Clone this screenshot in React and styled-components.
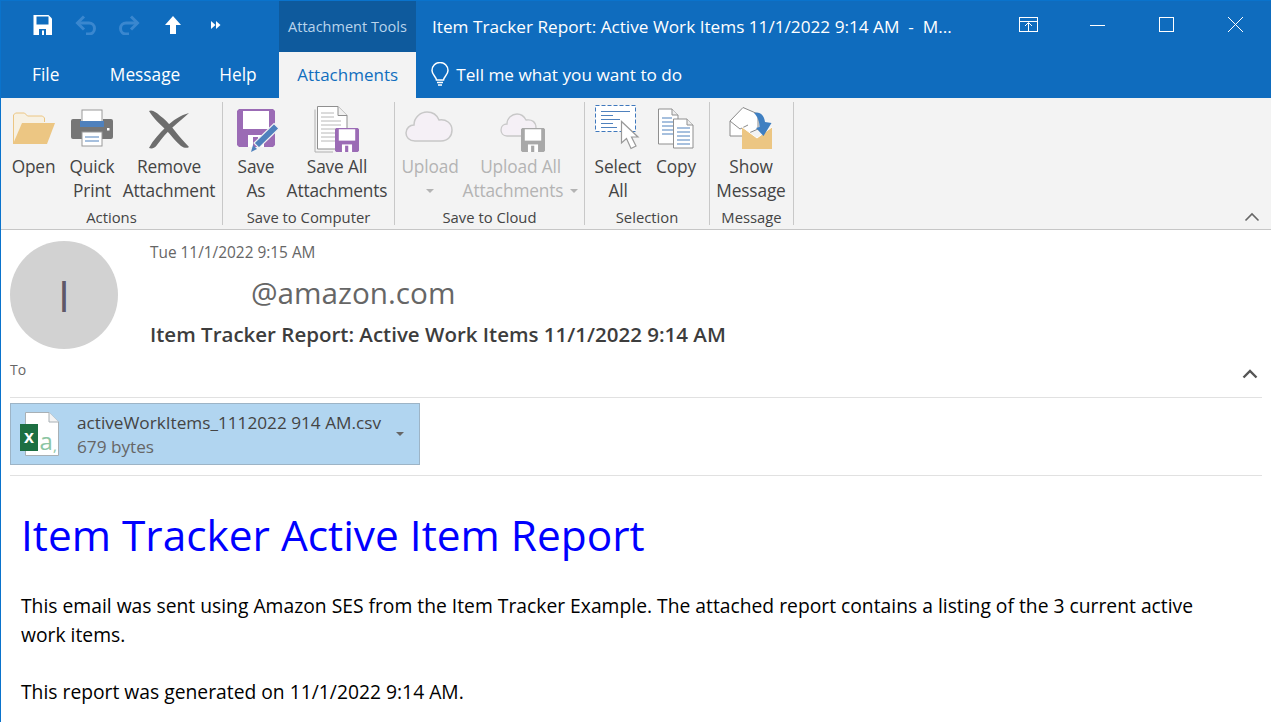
import React from "react";
import styled, { createGlobalStyle } from "styled-components";

const UI_FONT = `"Open Sans", "Noto Sans", "Liberation Sans", sans-serif`;

const GlobalStyle = createGlobalStyle`
  html, body {
    margin: 0;
    padding: 0;
    background: #fff;
    overflow: hidden;
  }
  body {
    font-family: ${UI_FONT};
  }
`;

const Window = styled.div`
  width: 1271px;
  height: 722px;
  box-sizing: border-box;
  border-left: 1px solid #0a73cc;
  overflow: hidden;
  background: #fff;
  display: flex;
  flex-direction: column;
`;

const TitleBar = styled.header`
  height: 52px;
  flex: none;
  display: flex;
  align-items: stretch;
  background: #0f6cbe;
  border-top: 1px solid #0a73cc;
  box-sizing: border-box;
  color: #fff;
`;

const QuickAccess = styled.div`
  width: 278px;
  flex: none;
  display: flex;
  align-items: center;
  padding-left: 26px;
  box-sizing: border-box;
`;

const QuickButton = styled.span`
  width: ${(p) => p.$w}px;
  margin-left: ${(p) => p.$gap || 0}px;
  height: 32px;
  display: flex;
  align-items: center;
  justify-content: center;
  margin-top: -3px;
`;

const ToolsLabel = styled.div`
  width: 137px;
  flex: none;
  background: #0e5a9d;
  color: #b9d4ec;
  font-size: 14.5px;
  display: flex;
  align-items: center;
  justify-content: center;
  padding-bottom: 1px;
  box-sizing: border-box;
`;

const WindowTitle = styled.div`
  flex: 1;
  padding-left: 16px;
  font-size: 17.2px;
  white-space: pre;
  display: flex;
  align-items: center;
  padding-bottom: 1px;
`;

const WindowControls = styled.div`
  display: flex;
  margin-right: 1px;
`;

const ControlButton = styled.span`
  width: 69px;
  display: flex;
  align-items: center;
  justify-content: center;
  margin-top: -5px;
`;

const TabBar = styled.nav`
  height: 46px;
  flex: none;
  display: flex;
  align-items: stretch;
  background: #0f6cbe;
  color: #fff;
`;

const Tab = styled.div`
  padding: 0 19.5px;
  font-size: 17.3px;
  display: flex;
  align-items: center;
  padding-bottom: 1px;
  box-sizing: border-box;
  &:first-child {
    padding-left: 31px;
    padding-right: 31px;
  }
`;

const ActiveTab = styled(Tab)`
  width: 137px;
  margin-left: 3px;
  padding: 0 0 1px;
  justify-content: center;
  font-size: 17px;
  background: #f3f3f3;
  color: #106ebe;
`;

const TellMe = styled.div`
  display: flex;
  align-items: center;
  gap: 6px;
  margin-left: 14px;
  font-size: 17.2px;
  padding-bottom: 1px;
`;

const Ribbon = styled.section`
  height: 132px;
  flex: none;
  display: flex;
  background: #f3f3f3;
  border-bottom: 1px solid #c6c6c6;
  box-sizing: border-box;
`;

const Group = styled.div`
  width: ${(p) => p.$w}px;
  flex: none;
  box-sizing: border-box;
  margin: 4px 0;
  border-right: 1px solid #c8c8c8;
  display: flex;
  flex-direction: column;
`;

const GroupButtons = styled.div`
  flex: 1;
  display: flex;
`;

const GroupLabel = styled.div`
  height: 16px;
  font-size: 14.8px;
  color: #444;
  text-align: center;
  line-height: 16px;
`;

const RibbonButton = styled.div`
  width: ${(p) => p.$w}px;
  flex: none;
  display: flex;
  flex-direction: column;
  align-items: center;
  color: ${(p) => (p.$disabled ? "#b4b4b4" : "#444")};
  font-size: 17.3px;
  line-height: 24px;
  letter-spacing: -0.15px;
`;

const IconSlot = styled.div`
  height: 53px;
  width: 100%;
  display: flex;
  justify-content: center;
  flex: none;
`;

const ButtonLine = styled.span`
  white-space: nowrap;
  display: flex;
  align-items: center;
  justify-content: center;
  height: 24px;
`;

const Caret = styled.i`
  display: inline-block;
  width: 0;
  height: 0;
  margin-left: ${(p) => p.$gap || 0}px;
  border-left: 4px solid transparent;
  border-right: 4px solid transparent;
  border-top: 4px solid ${(p) => p.$color || "#b4b4b4"};
`;

const CollapseButton = styled.div`
  margin-left: auto;
  align-self: flex-end;
  margin-right: 11px;
  margin-bottom: 7px;
  display: flex;
`;

const Message = styled.main`
  flex: 1;
  padding: 0 9px;
  min-height: 0;
`;

const SenderRow = styled.div`
  display: flex;
  padding-top: 12px;
`;

const Avatar = styled.div`
  width: 108px;
  height: 108px;
  flex: none;
  margin-top: -1px;
  border-radius: 50%;
  background: #d2d2d2;
  color: #5f5868;
  font-size: 43px;
  display: flex;
  align-items: center;
  justify-content: center;
`;

const SenderInfo = styled.div`
  margin-left: 32px;
  display: flex;
  flex-direction: column;
`;

const DateLine = styled.div`
  font-size: 15.4px;
  color: #666;
  line-height: 22px;
`;

const Address = styled.div`
  margin: 9px 0 0 101px;
  font-size: 29.7px;
  line-height: 40px;
  color: #666;
`;

const Subject = styled.div`
  margin-top: 6px;
  font-size: 20.5px;
  line-height: 30px;
  font-weight: 600;
  color: #3d3d3d;
`;

const ToRow = styled.div`
  display: flex;
  justify-content: space-between;
  align-items: flex-end;
  height: 49px;
  box-sizing: border-box;
  padding: 11px 4px 18px 0;
  border-bottom: 1px solid #e1e1e1;
  font-size: 14px;
  color: #666;
`;

const ToLabel = styled.span`
  align-self: flex-start;
  line-height: 20px;
`;

const AttachmentRow = styled.div`
  padding: 5px 0 10px;
  border-bottom: 1px solid #e1e1e1;
`;

const AttachmentCard = styled.div`
  width: 410px;
  height: 62px;
  box-sizing: border-box;
  background: #b1d5f0;
  border: 1px solid #9db4c6;
  display: flex;
  align-items: center;
  padding-left: 8px;
`;

const AttachmentText = styled.div`
  margin-left: 17px;
  flex: 1;
  line-height: 24px;
  padding-top: 2px;
`;

const AttachmentName = styled.div`
  font-size: 17.2px;
  color: #444;
  white-space: nowrap;
`;

const AttachmentSize = styled.div`
  font-size: 17.2px;
  color: #666;
`;

const CardCaret = styled.div`
  margin-right: 15px;
  display: flex;
`;

const MailBody = styled.article`
  padding: 33px 0 0 11px;
  color: #000;
`;

const Heading = styled.h1`
  margin: 0;
  font-size: 42.4px;
  font-weight: 400;
  line-height: 52px;
  color: #0000ff;
`;

const Paragraph = styled.p`
  margin: ${(p) => p.$top}px 0 0;
  font-size: 19.3px;
  line-height: 29px;
  max-width: 1190px;
`;

function SaveSmall() {
  return (
    <svg width="20" height="20" viewBox="0 0 20 20">
      <path d="M0.500 0h15l3.500 3.500V20H0.500z" fill="#fff" />
      <rect x="3.500" y="1.500" width="12" height="8" fill="#0f6cbe" />
      <rect x="6" y="14" width="7" height="6" fill="#0f6cbe" />
      <rect x="9" y="15.500" width="2" height="4.500" fill="#fff" />
    </svg>
  );
}

function UndoArrow({ flip }) {
  return (
    <svg width="22" height="20" viewBox="0 0 22 20" style={flip ? { transform: "scaleX(-1)" } : undefined}>
      <path d="M2.500 8H14a5.500 5.500 0 0 1 0 11h-3" fill="none" stroke="#3a87cf" strokeWidth="3" />
      <path d="M9 1.500 2.500 8 9 14.500" fill="none" stroke="#3a87cf" strokeWidth="3" />
    </svg>
  );
}

function UpArrow() {
  return (
    <svg width="16" height="18" viewBox="0 0 16 18">
      <path d="M8 0 16 9H11V18H5V9H0z" fill="#fff" />
    </svg>
  );
}

function MoreArrows() {
  return (
    <svg width="10" height="8" viewBox="0 0 10 8">
      <path d="M0 0 4.500 4 0 8zM5 0 9.500 4 5 8z" fill="#fff" />
    </svg>
  );
}

function RibbonDisplay() {
  return (
    <svg width="19" height="15" viewBox="0 0 19 15" fill="none" stroke="#fff" strokeWidth="1">
      <rect x="0.500" y="0.500" width="18" height="14" />
      <path d="M0.500 4.500h18M9.500 15V6M6 9l3.500-3.500L13 9" />
    </svg>
  );
}

function Minimize() {
  return (
    <svg width="15" height="15" viewBox="0 0 15 15">
      <path d="M0 8.500h15" stroke="#fff" strokeWidth="1" />
    </svg>
  );
}

function Maximize() {
  return (
    <svg width="15" height="15" viewBox="0 0 15 15">
      <rect x="0.500" y="0.500" width="14" height="14" fill="none" stroke="#fff" />
    </svg>
  );
}

function CloseX() {
  return (
    <svg width="15" height="15" viewBox="0 0 15 15">
      <path d="M0 0 15 15M15 0 0 15" stroke="#fff" strokeWidth="1" />
    </svg>
  );
}

function Bulb() {
  return (
    <svg width="20" height="25" viewBox="0 0 20 25" fill="none" stroke="#fff" strokeWidth="1.500">
      <path d="M6.500 18c0-3-4.500-5-4.500-9.500a8 8 0 0 1 16 0c0 4.500-4.500 6.500-4.500 9.500z" />
      <path d="M7 20.500h6M8 23h4" />
    </svg>
  );
}

function FolderIcon() {
  return (
    <svg width="44" height="36" viewBox="0 0 44 36" style={{ marginTop: 8 }}>
      <path d="M1.500 34V5l2-2h9l3 3h15l2 2v4" fill="#f7f1e3" stroke="#ecc683" strokeWidth="1" />
      <path d="M1 34 10 13h33l-8 21z" fill="#ecc683" />
    </svg>
  );
}

function PrinterIcon() {
  return (
    <svg width="44" height="38" viewBox="0 0 44 38" style={{ marginTop: 7 }}>
      <rect x="12" y="1" width="20" height="14" fill="#fff" stroke="#9a9a9a" />
      <path d="M1 12a2 2 0 0 1 2-2h8v7h22v-7h8a2 2 0 0 1 2 2v16a2 2 0 0 1-2 2H3a2 2 0 0 1-2-2z" fill="#767676" />
      <rect x="10" y="12" width="24" height="6" fill="#4f81bd" />
      <rect x="37" y="19" width="2.500" height="2.500" fill="#fff" />
      <rect x="12" y="23" width="20" height="14" fill="#fff" stroke="#9a9a9a" />
      <path d="M15 28h14M15 32h14" stroke="#4f81bd" strokeWidth="1" />
    </svg>
  );
}

function RemoveIcon() {
  return (
    <svg width="44" height="40" viewBox="0 0 44 40" style={{ marginTop: 7 }}>
      <path d="M2 2C5 0 9 3 16 9c4 3.500 8 8 12 13 4 5 9 11 14 16-2 1.500-5 1-8-1-5-4-10-11-15-16C13 15 6 9 2 2z" fill="#6d6d6d" />
      <path d="M42 4c-8 2-16 7-23 14C12 25 6 31 2 39c3 1 6 0 8-3 5-7 10-13 16-18 5-5 11-9 16-14z" fill="#6d6d6d" />
    </svg>
  );
}

function Floppy({ size, color, x, y }) {
  return (
    <g transform={`translate(${x} ${y}) scale(${size / 38})`}>
      <path d="M2 0h34l2 2v34l-2 2H2l-2-2V2z" fill={color} />
      <rect x="6" y="2" width="26" height="18" fill="#fff" />
      <rect x="11" y="26" width="16" height="12" fill="#fff" />
      <rect x="16" y="28" width="5" height="10" fill={color} />
    </g>
  );
}

function SaveAsIcon() {
  return (
    <svg width="48" height="46" viewBox="0 0 48 46" style={{ marginTop: 7 }}>
      <Floppy size={38} color="#9b6bb5" x={5} y={0} />
      <path d="M42 14.500 47 19.500 27 39 22 34z" fill="#4f81bd" stroke="#f3f3f3" strokeWidth="1.200" />
      <path d="M21 36 25 40 19 43z" fill="#4f81bd" />
    </svg>
  );
}

function SaveAllIcon() {
  return (
    <svg width="46" height="50" viewBox="0 0 46 50" style={{ marginTop: 3 }}>
      <path d="M3.500 1.500H24l9 9V44H3.500z" fill="#fff" stroke="#8f8f8f" />
      <path d="M1 4.500V47h18" fill="none" stroke="#b0b0b0" />
      <path d="M24 1.500v9h9" fill="#f0f0f0" stroke="#8f8f8f" />
      <path d="M7 8h13M7 12h13M7 16h20M7 20h20M7 24h20M7 28h14M7 32h14M7 36h14" stroke="#b8b8b8" strokeWidth="1" />
      <Floppy size={24} color="#9b6bb5" x={21} y={23} />
    </svg>
  );
}

function CloudIcon() {
  return (
    <svg width="50" height="34" viewBox="0 0 50 34" style={{ marginTop: 8 }}>
      <path
        d="M10 31C4 31 1 27 1 23c0-5 4-8 8-8 0-8 7-13 13-13 6 0 10 3 12 8 7-1 13 3 13 10 0 6-4 11-11 11z"
        fill="#f5f0f6"
        stroke="#c8c8c8"
        strokeWidth="1.500"
      />
    </svg>
  );
}

function CloudSaveIcon() {
  return (
    <svg width="48" height="50" viewBox="0 0 48 50" style={{ marginTop: 2 }}>
      <g transform="translate(3 4)">
        <path
          d="M7 28C3 28 1 25 1 22c0-4 3-6 6-6 0-6 5-10 10-10 4 0 7 2 9 6 6-1 10 2 10 8 0 5-3 8-7 8z"
          fill="#f5f0f6"
          stroke="#c8c8c8"
          strokeWidth="1.300"
        />
      </g>
      <Floppy size={24} color="#a8a8a8" x={24} y={24} />
    </svg>
  );
}

function SelectAllIcon() {
  return (
    <svg width="46" height="46" viewBox="0 0 46 46" style={{ marginTop: 3 }}>
      <rect x="0.500" y="0.500" width="40" height="26" fill="#fff" stroke="#3f78bd" strokeDasharray="4 2" />
      <path d="M6 6.500h29M6 10.500h12M6 14.500h19M6 18.500h12M6 22.500h16" stroke="#4f81bd" strokeWidth="1" />
      <path d="M26.500 16.500V38l5-4.500 4.500 10 5-2.500-4.500-9H43z" fill="#fff" stroke="#999" strokeWidth="1.200" />
    </svg>
  );
}

function CopyIcon() {
  return (
    <svg width="38" height="42" viewBox="0 0 38 42" style={{ marginTop: 6 }}>
      <path d="M1.500 1H15l6 6v29H1.500z" fill="#fff" stroke="#8f8f8f" />
      <path d="M15 1v6h6" fill="#eee" stroke="#8f8f8f" />
      <path d="M5 10h10M5 14h12M5 18h12M5 22h12M5 26h12" stroke="#4f81bd" strokeWidth="1" />
      <path d="M16.500 11H30l6 6v23H16.500z" fill="#fff" stroke="#8f8f8f" />
      <path d="M30 11v6h6" fill="#eee" stroke="#8f8f8f" />
      <path d="M20 20h13M20 24h13M20 28h13M20 32h13M20 36h13" stroke="#4f81bd" strokeWidth="1" />
    </svg>
  );
}

function ShowMessageIcon() {
  return (
    <svg width="46" height="46" viewBox="0 0 46 46" style={{ marginTop: 3 }}>
      <path d="M2 16 15 2.500 30 9V24L14 31H2z" fill="#fff" stroke="#8a8a8a" />
      <path d="M2 16 12 24 20 20" fill="none" stroke="#8a8a8a" />
      <path d="M14 22 29 33 44 22V44H14z" fill="#ecc683" />
      <path d="M14 22 29 33 44 22" fill="none" stroke="#fff" strokeWidth="1" />
      <path d="M26 8c6-2 10 2 11 9l6.500 1L35.500 31 28 23l3.500-1c0-5-1.500-10-5.500-14z" fill="#3f7fc1" />
    </svg>
  );
}

function ExcelIcon() {
  return (
    <svg width="41" height="44" viewBox="0 0 41 44">
      <path d="M6.500 0.500H30L39.500 10V43.500H6.500z" fill="#fff" stroke="#a8b0b5" />
      <path d="M30 0.500V10H39.500" fill="#f4f4f4" stroke="#a8b0b5" />
      <rect x="1" y="12" width="18" height="27" fill="#1d6f42" />
      <text x="10" y="31" textAnchor="middle" fontFamily="Liberation Sans, sans-serif" fontSize="18" fontWeight="700" fill="#fff">x</text>
      <text x="20.500" y="38" fontFamily="Open Sans, sans-serif" fontSize="24" fill="#8cc5a3">a</text>
      <text x="34" y="39" fontFamily="Open Sans, sans-serif" fontSize="15" fill="#8cc5a3">,</text>
    </svg>
  );
}

function ChevronUp({ color = "#555", strokeWidth = 2.4 }) {
  return (
    <svg width="16" height="10" viewBox="0 0 16 10">
      <path d="M1.500 8.500 8 2l6.500 6.500" fill="none" stroke={color} strokeWidth={strokeWidth} />
    </svg>
  );
}

const groups = [
  {
    label: "Actions",
    w: 222,
    buttons: [
      { w: 65, icon: <FolderIcon />, lines: ["Open"] },
      { w: 52, icon: <PrinterIcon />, lines: ["Quick", "Print"] },
      { w: 102, icon: <RemoveIcon />, lines: ["Remove", "Attachment"] },
    ],
  },
  {
    label: "Save to Computer",
    w: 172,
    buttons: [
      { w: 66, icon: <SaveAsIcon />, lines: ["Save", "As"] },
      { w: 96, icon: <SaveAllIcon />, lines: ["Save All", "Attachments"] },
    ],
  },
  {
    label: "Save to Cloud",
    w: 190,
    buttons: [
      { w: 70, disabled: true, icon: <CloudIcon />, lines: ["Upload"], caret: "below" },
      { w: 111, disabled: true, icon: <CloudSaveIcon />, lines: ["Upload All", "Attachments"], caret: "inline" },
    ],
  },
  {
    label: "Selection",
    w: 125,
    buttons: [
      { w: 66, icon: <SelectAllIcon />, lines: ["Select", "All"] },
      { w: 50, icon: <CopyIcon />, lines: ["Copy"] },
    ],
  },
  {
    label: "Message",
    w: 84,
    buttons: [{ w: 82, icon: <ShowMessageIcon />, lines: ["Show", "Message"] }],
  },
];

function App() {
  return (
    <>
      <GlobalStyle />
      <Window>
        <TitleBar>
          <QuickAccess>
            <QuickButton $w={32}><SaveSmall /></QuickButton>
            <QuickButton $w={43} $gap={5}><UndoArrow /></QuickButton>
            <QuickButton $w={43}><UndoArrow flip /></QuickButton>
            <QuickButton $w={45}><UpArrow /></QuickButton>
            <QuickButton $w={42}><MoreArrows /></QuickButton>
          </QuickAccess>
          <ToolsLabel>Attachment Tools</ToolsLabel>
          <WindowTitle>{"Item Tracker Report: Active Work Items 11/1/2022 9:14 AM  -  M..."}</WindowTitle>
          <WindowControls>
            <ControlButton><RibbonDisplay /></ControlButton>
            <ControlButton><Minimize /></ControlButton>
            <ControlButton><Maximize /></ControlButton>
            <ControlButton><CloseX /></ControlButton>
          </WindowControls>
        </TitleBar>
        <TabBar>
          <Tab>File</Tab>
          <Tab>Message</Tab>
          <Tab>Help</Tab>
          <ActiveTab>Attachments</ActiveTab>
          <TellMe>
            <Bulb />
            Tell me what you want to do
          </TellMe>
        </TabBar>
        <Ribbon>
          {groups.map((g) => (
            <Group key={g.label} $w={g.w}>
              <GroupButtons>
                {g.buttons.map((b) => (
                  <RibbonButton key={b.lines[0]} $w={b.w} $disabled={b.disabled}>
                    <IconSlot>{b.icon}</IconSlot>
                    {b.lines.map((line, i) => (
                      <ButtonLine key={line}>
                        {line}
                        {b.caret === "inline" && i === 1 && <Caret $gap={7} />}
                      </ButtonLine>
                    ))}
                    {b.caret === "below" && (
                      <ButtonLine><Caret /></ButtonLine>
                    )}
                  </RibbonButton>
                ))}
              </GroupButtons>
              <GroupLabel>{g.label}</GroupLabel>
            </Group>
          ))}
          <CollapseButton><ChevronUp color="#666" strokeWidth={1.6} /></CollapseButton>
        </Ribbon>
        <Message>
          <SenderRow>
            <Avatar>I</Avatar>
            <SenderInfo>
              <DateLine>Tue 11/1/2022 9:15 AM</DateLine>
              <Address>@amazon.com</Address>
              <Subject>Item Tracker Report: Active Work Items 11/1/2022 9:14 AM</Subject>
            </SenderInfo>
          </SenderRow>
          <ToRow>
            <ToLabel>To</ToLabel>
            <ChevronUp />
          </ToRow>
          <AttachmentRow>
            <AttachmentCard>
              <ExcelIcon />
              <AttachmentText>
                <AttachmentName>activeWorkItems_1112022 914 AM.csv</AttachmentName>
                <AttachmentSize>679 bytes</AttachmentSize>
              </AttachmentText>
              <CardCaret><Caret $color="#666" /></CardCaret>
            </AttachmentCard>
          </AttachmentRow>
          <MailBody>
            <Heading>Item Tracker Active Item Report</Heading>
            <Paragraph $top={30}>
              This email was sent using Amazon SES from the Item Tracker Example. The attached report contains a listing of the 3 current active work items.
            </Paragraph>
            <Paragraph $top={28}>This report was generated on 11/1/2022 9:14 AM.</Paragraph>
          </MailBody>
        </Message>
      </Window>
    </>
  );
}

export default App;
